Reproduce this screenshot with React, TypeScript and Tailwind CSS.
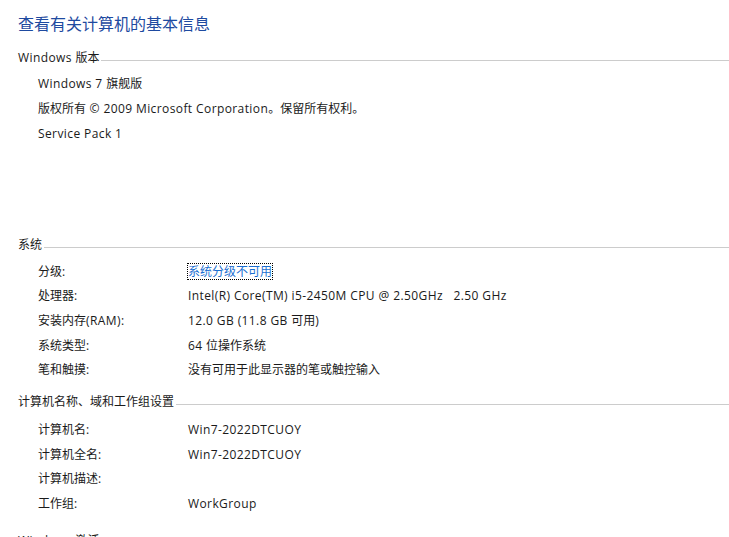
import React from "react";

type Row = { label: string; value?: string; link?: boolean };

const font = { fontFamily: '"Open Sans", "Noto Sans CJK SC", sans-serif' };

const systemRows: Row[] = [
  { label: "分级:", value: "系统分级不可用", link: true },
  { label: "处理器:", value: "Intel(R) Core(TM) i5-2450M CPU @ 2.50GHz   2.50 GHz" },
  { label: "安装内存(RAM):", value: "12.0 GB (11.8 GB 可用)" },
  { label: "系统类型:", value: "64 位操作系统" },
  { label: "笔和触摸:", value: "没有可用于此显示器的笔或触控输入" },
];

const computerRows: Row[] = [
  { label: "计算机名:", value: "Win7-2022DTCUOY" },
  { label: "计算机全名:", value: "Win7-2022DTCUOY" },
  { label: "计算机描述:" },
  { label: "工作组:", value: "WorkGroup" },
];

// Latin runs get a little tracking so they come out as wide as Segoe UI does
function Mixed({ text }: { text: string }) {
  const parts = text.split(/([\u3000-\u9fff\uff00-\uffef]+)/);
  return (
    <>
      {parts.map((p, i) =>
        /[\u3000-\u9fff\uff00-\uffef]/.test(p) ? (
          <span key={i}>{p}</span>
        ) : (
          <span key={i} className="tracking-[0.4px]">
            {p}
          </span>
        ),
      )}
    </>
  );
}

function SectionHeading({ title, className = "" }: { title: string; className?: string }) {
  return (
    <div className={`flex h-5 items-center ${className}`}>
      <span className="whitespace-pre pr-[2px]">
        <Mixed text={title} />
      </span>
      <div className="mt-[4px] h-px flex-1 bg-[#cccccc]" />
    </div>
  );
}

function InfoRow({ row }: { row: Row }) {
  return (
    <div className="flex h-[24.6px] items-center pl-5">
      <span className="w-[150px] shrink-0 whitespace-pre">
        <Mixed text={row.label} />
      </span>
      {row.link ? (
        <span className="-ml-px border border-dotted border-black leading-[15px] text-[#1c6fd1]">
          {row.value}
        </span>
      ) : (
        <span className="whitespace-pre">
          <Mixed text={row.value ?? ""} />
        </span>
      )}
    </div>
  );
}

export default function App() {
  return (
    <div
      className="h-[537px] w-[729px] overflow-hidden bg-white pl-[18px] text-[12px] text-[#1a1a1a]"
      style={font}
    >
      <h1 className="mt-[12px] flex h-6 items-center text-[16px] text-[#1e4aa0]">
        查看有关计算机的基本信息
      </h1>

      <SectionHeading title="Windows 版本" className="mt-3" />
      <div className="mt-[3.5px] pl-5">
        <div className="flex h-[25px] items-center whitespace-pre">
          <Mixed text="Windows 7 旗舰版" />
        </div>
        <div className="flex h-[25px] items-center whitespace-pre">
          <Mixed text="版权所有 © 2009 Microsoft Corporation。保留所有权利。" />
        </div>
        <div className="flex h-[25px] items-center whitespace-pre">
          <Mixed text="Service Pack 1" />
        </div>
      </div>

      <SectionHeading title="系统" className="mt-[88.5px]" />
      <div className="mt-[4.5px]">
        {systemRows.map((r) => (
          <InfoRow key={r.label} row={r} />
        ))}
      </div>

      <SectionHeading title="计算机名称、域和工作组设置" className="mt-[10px]" />
      <div className="mt-[5.5px]">
        {computerRows.map((r) => (
          <InfoRow key={r.label} row={r} />
        ))}
      </div>

      <SectionHeading title="Windows 激活" className="mt-[15px]" />
    </div>
  );
}
